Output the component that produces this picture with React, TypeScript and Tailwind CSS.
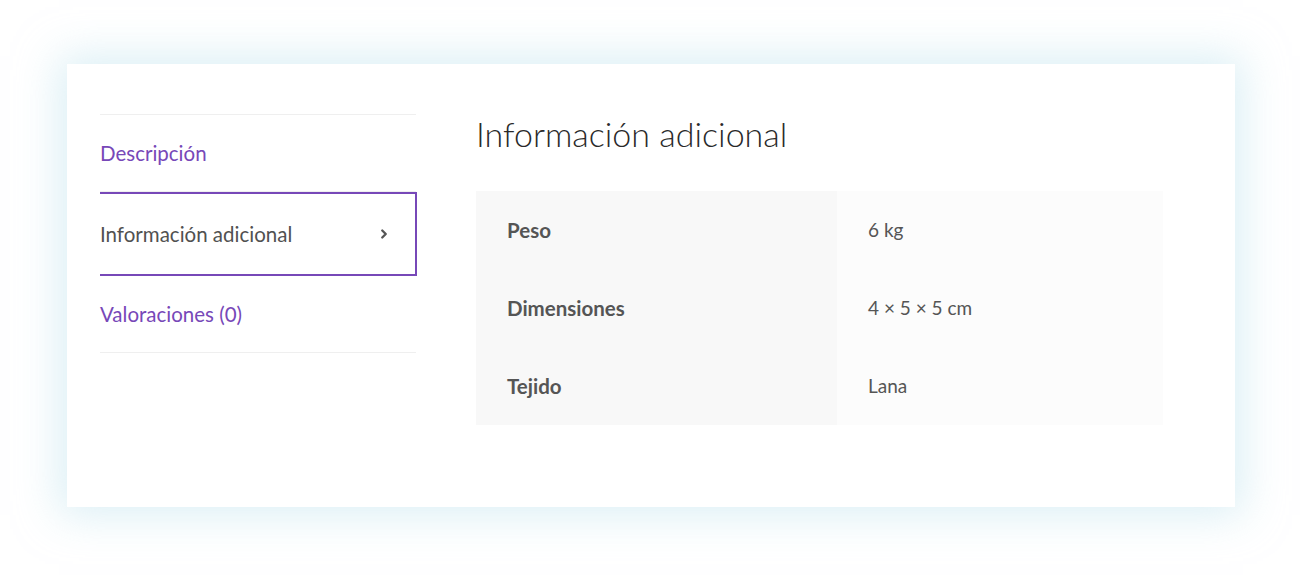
import { ChevronRight } from 'lucide-react';

const tabs = [
  { label: 'Descripción', active: false },
  { label: 'Información adicional', active: true },
  { label: 'Valoraciones (0)', active: false },
];

const rows = [
  { name: 'Peso', value: '6 kg' },
  { name: 'Dimensiones', value: '4 × 5 × 5 cm' },
  { name: 'Tejido', value: 'Lana' },
];

export default function App() {
  return (
    <div className="w-[1300px] h-[582px] bg-white pl-[67px] pt-[64px] font-['Lato','Open_Sans',sans-serif]">
      <div className="w-[1168px] h-[443px] bg-white shadow-[0_0_40px_8px_rgba(190,225,236,0.55)] flex pl-[33px] pt-[50px]">
        <ul className="w-[316px] border-t border-[#efefef]">
          {tabs.map((t) =>
            t.active ? (
              <li
                key={t.label}
                className="h-[84px] -mr-[1px] flex items-center justify-between border-y-2 border-r-2 border-[#7748b8] pr-[24px] text-[20.5px] text-[#515151]"
              >
                <span>{t.label}</span>
                <ChevronRight size={14} strokeWidth={4} className="text-[#555]" />
              </li>
            ) : (
              <li
                key={t.label}
                className="h-[77px] flex items-center border-b border-[#efefef] text-[20.5px] text-[#7748b8]"
              >
                {t.label}
              </li>
            )
          )}
        </ul>
        <div className="ml-[60px]">
          <h2 className="text-[34px] leading-[40px] font-light text-[#2a2a2a]">Información adicional</h2>
          <table className="mt-[37px] w-[687px] border-collapse">
            <tbody>
              {rows.map((r) => (
                <tr key={r.name} className="h-[78px]">
                  <th className="w-[361px] bg-[#f8f8f8] pl-[31px] text-left text-[20.5px] font-bold text-[#555]">{r.name}</th>
                  <td className="bg-[#fcfcfc] pl-[31px] text-[19px] text-[#555]">{r.value}</td>
                </tr>
              ))}
            </tbody>
          </table>
        </div>
      </div>
    </div>
  );
}
